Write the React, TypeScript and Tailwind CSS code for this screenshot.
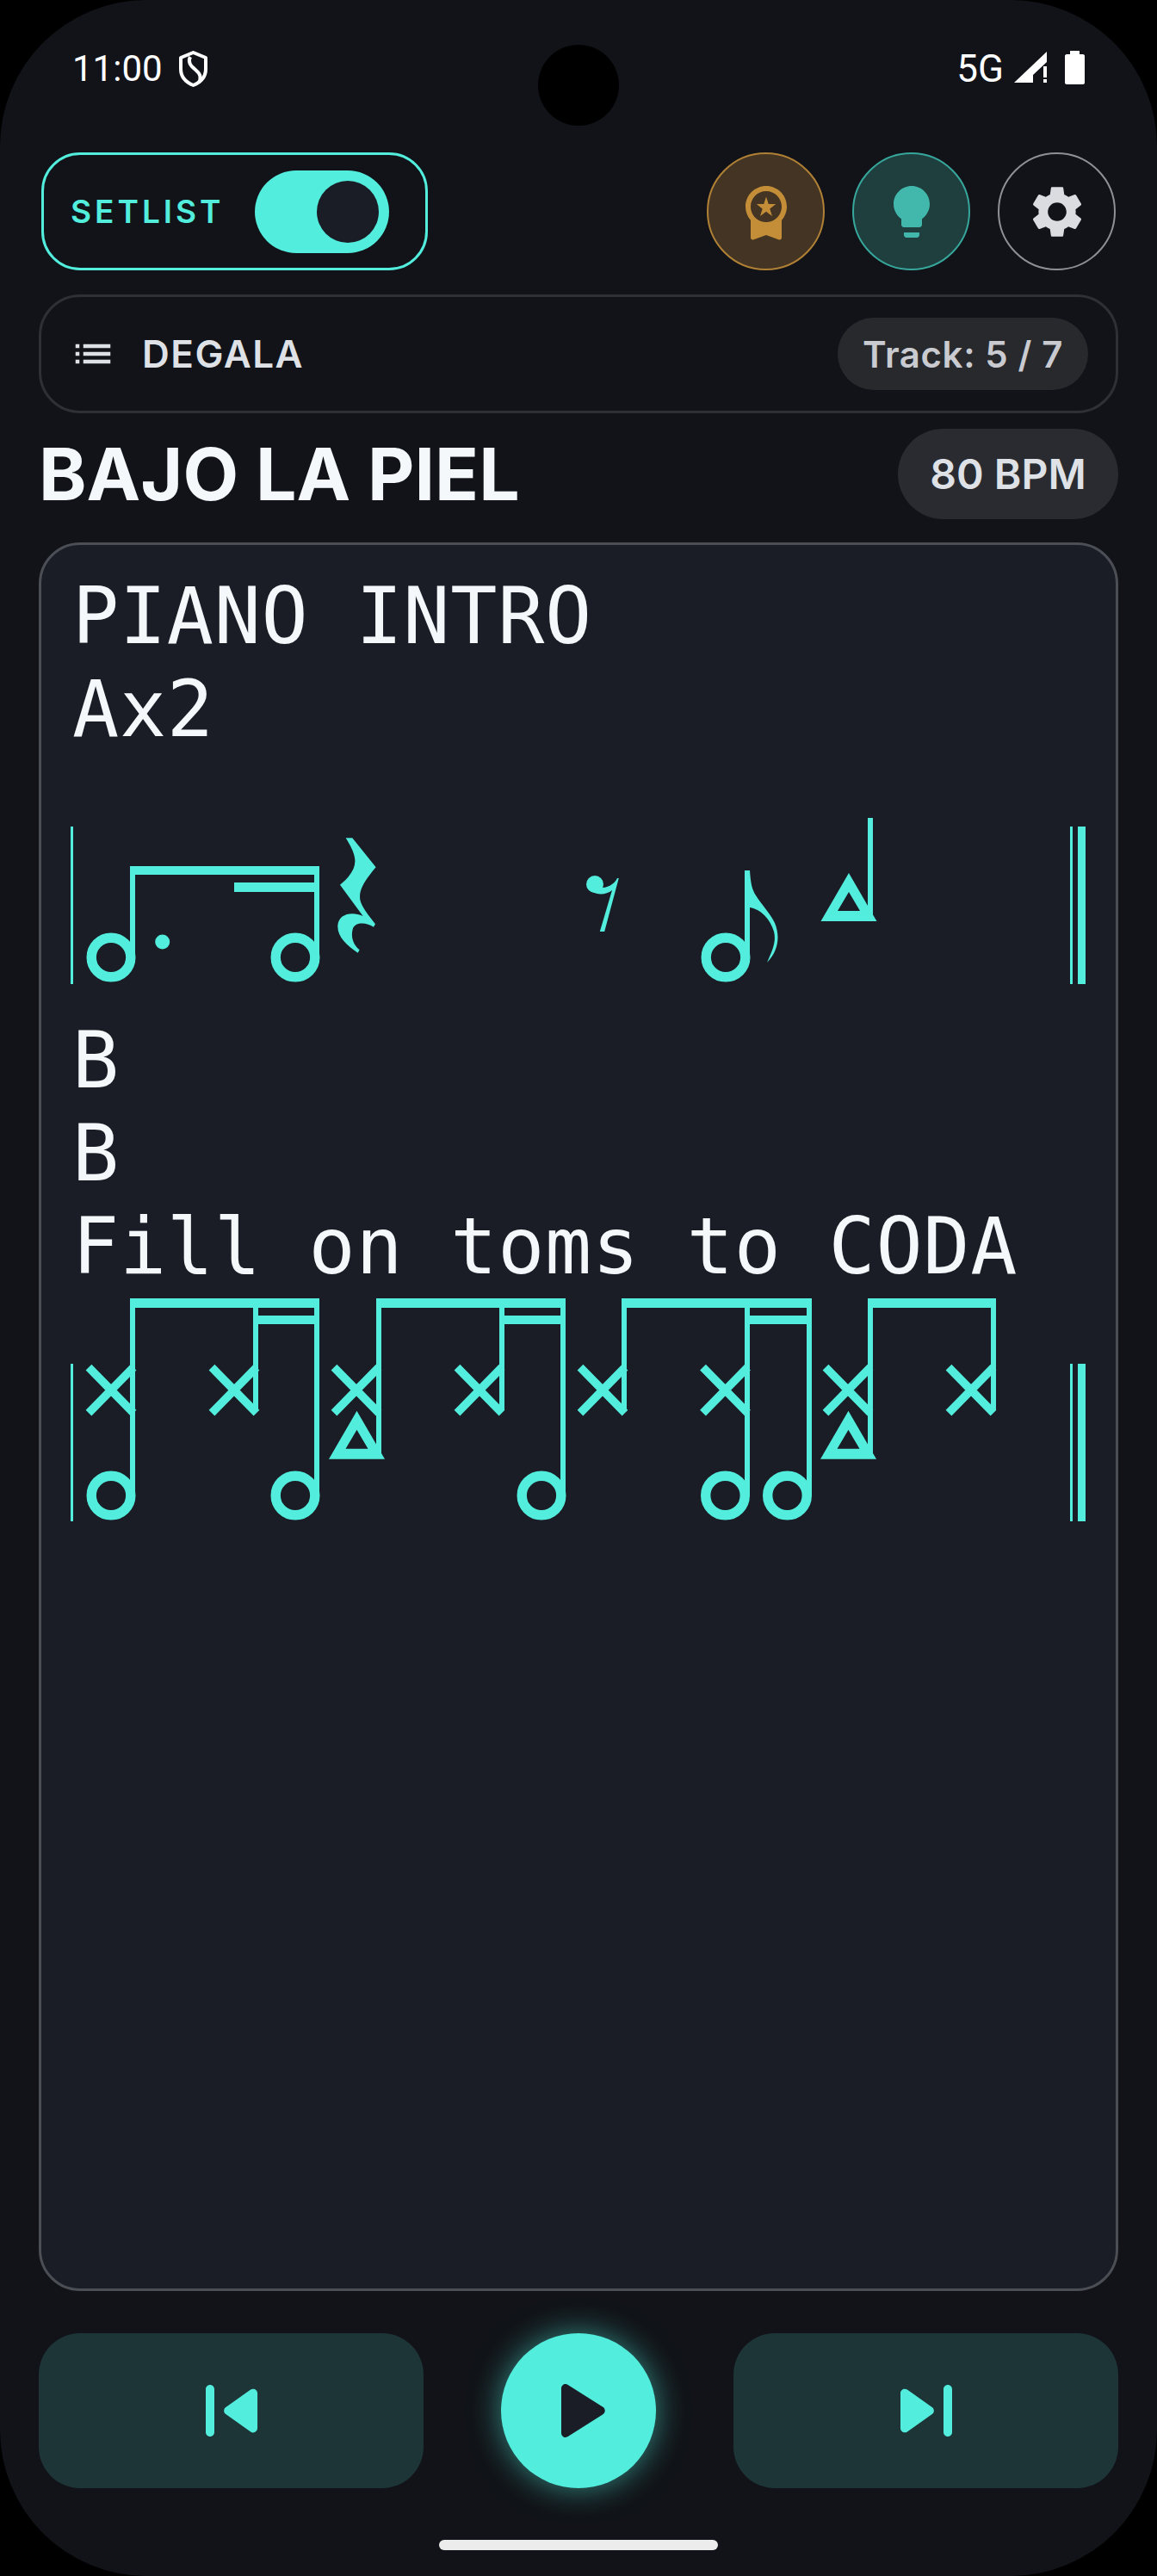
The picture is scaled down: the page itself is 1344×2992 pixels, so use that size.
import * as React from 'react';

const TEAL = '#52EDDC';
const mono = "font-['DejaVu_Sans_Mono',monospace]";

function Head({ x, y }: { x: number; y: number }) {
  return <circle cx={x} cy={y} r={22.8} fill="none" stroke={TEAL} strokeWidth={11.4} />;
}

function Cross({ x, y }: { x: number; y: number }) {
  return (
    <path
      d={`M${x - 26} ${y - 26.5}L${x + 26} ${y + 26.5}M${x + 26} ${y - 26.5}L${x - 26} ${y + 26.5}`}
      stroke={TEAL}
      strokeWidth={9.5}
      fill="none"
    />
  );
}

function Triangle({ x, y }: { x: number; y: number }) {
  // y is the bottom of the base
  return (
    <path
      fillRule="evenodd"
      fill={TEAL}
      d={`M${x} ${y - 56}L${x + 32.5} ${y}H${x - 32.5}ZM${x} ${y - 34}L${x - 13} ${y - 12}H${x + 13}Z`}
    />
  );
}

function Bar({ x, y, w, h }: { x: number; y: number; w: number; h: number }) {
  return <rect x={x} y={y} width={w} height={h} fill={TEAL} />;
}

function FinalBar({ top }: { top: number }) {
  return (
    <>
      <Bar x={1243} y={top} w={3} h={183} />
      <Bar x={1252} y={top} w={9} h={183} />
    </>
  );
}

function StaffOne() {
  return (
    <svg width={1180} height={300} viewBox="82 878 1180 300" className="block -ml-[2px]">
      <Bar x={82} y={960} w={3} h={183} />
      <Head x={129} y={1112} />
      <Bar x={151} y={1006} w={6} h={106} />
      <Bar x={151} y={1006} w={220} h={10} />
      <Bar x={272} y={1025} w={99} h={11} />
      <Bar x={365} y={1006} w={6} h={106} />
      <Head x={343} y={1112} />
      <circle cx={188.7} cy={1094} r={8.5} fill={TEAL} />
      {/* quarter rest */}
      <g transform="translate(50 930) scale(0.3333)">
        <path
          fill={TEAL}
          d="M1055 130L1078 130L1160 232C1120 280 1100 310 1105 345C1110 370 1135 400 1158 430L1152 440C1130 425 1090 420 1080 445C1070 480 1085 505 1103 520L1097 530C1060 505 1025 475 1027 435C1030 395 1075 385 1115 402L1035 293C1070 265 1090 235 1087 205C1085 180 1070 155 1055 130Z"
        />
      </g>
      {/* eighth rest */}
      <circle cx={691} cy={1027} r={10} fill={TEAL} />
      <path
        fill={TEAL}
        d="M718.8 1020L702.2 1082H696.8L711 1034C705 1039 695 1040 688 1036L692 1030C700 1033 712 1030 717 1020Z"
      />
      {/* eighth note */}
      <Head x={843} y={1112} />
      <Bar x={865} y={1011} w={6} h={101} />
      <path
        fill={TEAL}
        d="M871 1011C872 1025 873 1032 878 1040C884 1050 894 1060 900 1072C906 1086 905 1104 891 1118C897 1104 902 1094 899 1082C895 1068 884 1056 871 1054Z"
      />
      {/* triangle note */}
      <Triangle x={986} y={1070} />
      <Bar x={1008} y={950} w={6} h={116} />
      <FinalBar top={960} />
    </svg>
  );
}

function StaffTwo() {
  const crosses = [129, 272, 414, 557, 700, 842.5, 985, 1128];
  const heads = [129, 343, 629, 842.5, 914.5];
  const stems = [
    [151, 1737],
    [294, 1637],
    [365, 1737],
    [437, 1690],
    [580, 1637],
    [651, 1737],
    [722, 1637],
    [865, 1737],
    [937, 1737],
    [1008, 1690],
    [1151, 1637],
  ];
  const beams = [
    [151, 371],
    [437, 657],
    [722, 943],
    [1008, 1157],
  ];
  const subBeams = [
    [294, 371],
    [580, 657],
    [865, 943],
  ];
  return (
    <svg width={1180} height={275} viewBox="82 1502 1180 275" className="block -ml-[2px]">
      <Bar x={82} y={1584} w={3} h={183} />
      {beams.map(([a, b]) => (
        <Bar key={a} x={a} y={1508} w={b - a} h={11} />
      ))}
      {subBeams.map(([a, b]) => (
        <Bar key={a} x={a} y={1528} w={b - a} h={10} />
      ))}
      {stems.map(([x, end]) => (
        <Bar key={x} x={x} y={1508} w={6} h={end - 1508} />
      ))}
      {crosses.map((x) => (
        <Cross key={x} x={x} y={1614.7} />
      ))}
      {heads.map((x) => (
        <Head key={x} x={x} y={1737} />
      ))}
      <Triangle x={414.5} y={1694.7} />
      <Triangle x={985.5} y={1694.7} />
      <FinalBar top={1584} />
    </svg>
  );
}

function StatusBar() {
  return (
    <div className="h-[177px] pl-[84px] pr-[83px] pt-[55px] flex items-start justify-between text-white font-['Roboto',sans-serif] text-[42px] leading-[50px]">
      <div className="flex items-center gap-[17px]">
        <span>11:00</span>
        <svg width={36} height={44} viewBox="205 58 36 44" fill="none" stroke="white" strokeWidth={4}>
          <path d="M223.5 61L238 67V80C238 90 231 96 223.5 99C216 96 209 90 209 80V67Z" strokeLinejoin="round" />
          <path d="M220 66C217 72 220 76 226 81C232 86 233 90 230 96" />
        </svg>
      </div>
      <div className="flex items-center">
        <span className="text-[44px]">5G</span>
        <svg width={95} height={44} viewBox="1166 58 95 44" fill="white">
          <path d="M1178 96L1216 60V72L1200 87V96Z" />
          <rect x={1212} y={77} width={4} height={13} />
          <rect x={1212} y={92} width={4} height={4} />
          <path d="M1243 59H1254V63H1258C1259 63 1260 64 1260 65V96C1260 97 1259 98 1258 98H1239C1238 98 1237 97 1237 96V65C1237 64 1238 63 1239 63H1243Z" />
        </svg>
      </div>
    </div>
  );
}

function Controls() {
  return (
    <div className="h-[137px] px-[48px] flex items-center justify-between">
      <div className="w-[449px] h-[137px] border-[3px] border-[#52EDDC] rounded-[45px] pl-[31px] pr-[42px] flex items-center justify-between">
        <span className="font-['Inter',sans-serif] font-semibold text-[37px] tracking-[4px] text-[#52EDDC]">SETLIST</span>
        <div className="w-[156px] h-[96px] rounded-full bg-[#52EDDC] flex items-center justify-end pr-[12px]">
          <div className="w-[72px] h-[72px] rounded-full bg-[#1A1D26]" />
        </div>
      </div>
      <div className="flex gap-[32px]">
        <div className="w-[137px] h-[137px] rounded-full border-[2px] border-[#B08035] bg-[#433424] flex items-center justify-center">
          <svg width={72} height={72} viewBox="0 0 24 24" fill="#C48D38">
            <path d="M9.68 13.69L12 11.93l2.31 1.76-.88-2.85L15.75 9h-2.84L12 6.19 11.09 9H8.25l2.31 1.84-.88 2.85zM20 10c0-4.42-3.58-8-8-8s-8 3.58-8 8c0 2.03.76 3.87 2 5.28V22c0 .6.5 1 1 .8L12 21l5 1.8c.5.2 1-.2 1-.8v-6.72c1.24-1.41 2-3.25 2-5.28zM12 4c3.31 0 6 2.69 6 6s-2.69 6-6 6-6-2.69-6-6 2.69-6 6-6z" />
          </svg>
        </div>
        <div className="w-[137px] h-[137px] rounded-full border-[2px] border-[#37A69B] bg-[#1F3F3F] flex items-center justify-center">
          <svg width={72} height={72} viewBox="0 0 24 24" fill="#41B8AB">
            <path d="M9 21c0 .55.45 1 1 1h4c.55 0 1-.45 1-1v-1H9v1zm3-19C8.14 2 5 5.14 5 9c0 2.38 1.19 4.47 3 5.74V17c0 .55.45 1 1 1h6c.55 0 1-.45 1-1v-2.26c1.81-1.27 3-3.36 3-5.74 0-3.86-3.14-7-7-7z" />
          </svg>
        </div>
        <div className="w-[137px] h-[137px] rounded-full border-[2px] border-[#8F9094] flex items-center justify-center">
          <svg width={72} height={72} viewBox="0 0 24 24" fill="#DADCE0">
            <path d="M19.14 12.94c.04-.3.06-.61.06-.94 0-.32-.02-.64-.07-.94l2.03-1.58c.18-.14.23-.41.12-.61l-1.92-3.32c-.12-.22-.37-.29-.59-.22l-2.39.96c-.5-.38-1.03-.7-1.62-.94L14.4 2.81c-.04-.24-.24-.41-.48-.41h-3.84c-.24 0-.43.17-.47.41L9.25 5.35c-.59.24-1.13.57-1.62.94L5.24 5.33c-.22-.08-.47 0-.59.22L2.74 8.87c-.12.21-.08.47.12.61l2.03 1.58c-.05.3-.09.63-.09.94s.02.64.07.94l-2.03 1.58c-.18.14-.23.41-.12.61l1.92 3.32c.12.22.37.29.59.22l2.39-.96c.5.38 1.03.7 1.62.94l.36 2.54c.05.24.24.41.48.41h3.84c.24 0 .44-.17.47-.41l.36-2.54c.59-.24 1.13-.56 1.62-.94l2.39.96c.22.08.47 0 .59-.22l1.92-3.32c.12-.22.07-.47-.12-.61l-2.01-1.58zM12 15.6c-1.98 0-3.6-1.62-3.6-3.6s1.62-3.6 3.6-3.6 3.6 1.62 3.6 3.6-1.62 3.6-3.6 3.6z" />
          </svg>
        </div>
      </div>
    </div>
  );
}

function SetlistBar() {
  return (
    <div className="mx-[45px] mt-[28px] h-[138px] border-[3px] border-[#2E3036] rounded-[48px] pl-[33px] pr-[32px] flex items-center justify-between font-['Inter',sans-serif]">
      <div className="flex items-center gap-[30px]">
        <svg width={54} height={54} viewBox="0 0 24 24" fill="#DEE1E6">
          <path d="M3 13h2v-2H3v2zm0 4h2v-2H3v2zm0-8h2V7H3v2zm4 4h14v-2H7v2zm0 4h14v-2H7v2zM7 7v2h14V7H7z" />
        </svg>
        <span className="text-[44px] font-semibold tracking-[1.5px] text-[#DEE1E6]">DEGALA</span>
      </div>
      <div className="h-[84px] w-[291px] rounded-full bg-[#27292D] flex items-center justify-center text-[42px] tracking-[0.6px] font-semibold text-[#C9CBD0]">
        Track: 5 / 7
      </div>
    </div>
  );
}

function TitleRow() {
  return (
    <div className="mx-[45px] mt-[18px] h-[105px] flex items-center justify-between font-['Inter',sans-serif]">
      <h1 className="text-[84px] font-bold text-[#F5F8FB] leading-none">BAJO LA PIEL</h1>
      <div className="w-[256px] h-[105px] rounded-full bg-[#2A2B30] flex items-center justify-center text-[48px] font-semibold text-[#DEE1E6]">
        80 BPM
      </div>
    </div>
  );
}

function Sheet() {
  return (
    <div className={`mx-[45px] mt-[27px] h-[2031px] border-[3px] border-[#4B4E54] rounded-[48px] bg-[#1A1D26] px-[36px] pt-[29px] text-[90px] leading-[108px] text-[#F5F8FB] tracking-[0.72px] ${mono}`}>
      <div>PIANO INTRO</div>
      <div>Ax2</div>
      <StaffOne />
      <div>B</div>
      <div>B</div>
      <div>Fill on toms to CODA</div>
      <StaffTwo />
    </div>
  );
}

function Transport() {
  return (
    <div className="mx-[45px] mt-[49px] h-[180px] flex items-center justify-between">
      <div className="w-[447px] h-[180px] rounded-[48px] bg-[#1E3538] flex items-center justify-center">
        <svg width={120} height={120} viewBox="0 0 24 24" fill="#52EDDC">
          <path d="M7 6c.55 0 1 .45 1 1v10c0 .55-.45 1-1 1s-1-.45-1-1V7c0-.55.45-1 1-1zm3.66 6.82 5.77 4.07c.66.47 1.58-.01 1.58-.82V7.93c0-.81-.91-1.28-1.58-.82l-5.77 4.07c-.57.4-.57 1.24 0 1.64z" />
        </svg>
      </div>
      <div className="w-[180px] h-[180px] rounded-full bg-[#52EDDC] shadow-[0_0_36px_rgba(82,237,220,0.55)] flex items-center justify-center">
        <svg width={120} height={120} viewBox="0 0 24 24" fill="#1A1D26">
          <path d="M8 6.82v10.36c0 .79.87 1.27 1.54.84l8.14-5.18c.62-.39.62-1.29 0-1.69L9.54 5.98C8.87 5.55 8 6.03 8 6.82z" />
        </svg>
      </div>
      <div className="w-[447px] h-[180px] rounded-[48px] bg-[#1E3538] flex items-center justify-center">
        <svg width={120} height={120} viewBox="0 0 24 24" fill="#52EDDC">
          <path d="M7.58 16.89l5.77-4.07c.56-.4.56-1.24 0-1.63L7.58 7.11C6.91 6.65 6 7.12 6 7.93v8.14c0 .81.91 1.28 1.58.82zM16 7v10c0 .55.45 1 1 1s1-.45 1-1V7c0-.55-.45-1-1-1s-1 .45-1 1z" />
        </svg>
      </div>
    </div>
  );
}

export default function App() {
  return (
    <div className="w-[1344px] h-[2992px] bg-black overflow-hidden">
      <div className="relative w-full h-full rounded-[170px] bg-[#111318] flex flex-col">
        {/* camera cutout */}
        <div className="absolute left-[625px] top-[52px] w-[94px] h-[94px] rounded-full bg-black" />
        <StatusBar />
        <Controls />
        <SetlistBar />
        <TitleRow />
        <Sheet />
        <Transport />
        <div className="mt-[60px] mx-auto w-[324px] h-[12px] rounded-full bg-[#ECECEC]" />
      </div>
    </div>
  );
}
